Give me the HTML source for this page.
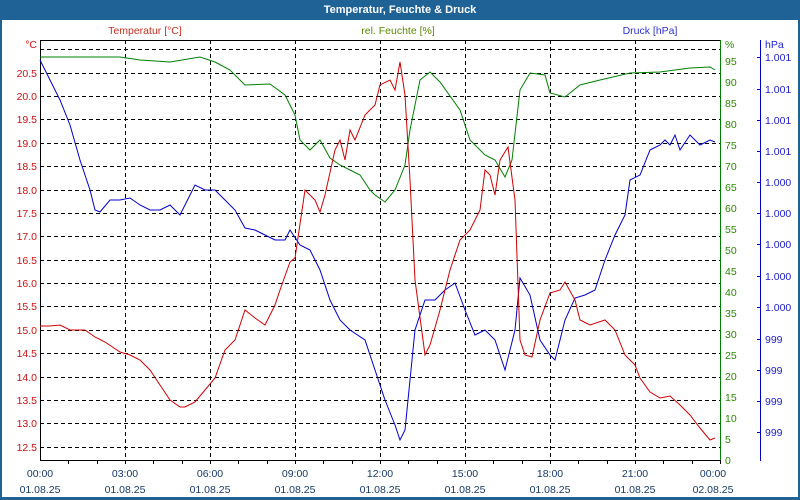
<!DOCTYPE html>
<html><head><meta charset="utf-8"><style>
html,body{margin:0;padding:0;width:800px;height:500px;overflow:hidden;background:#1e6296;}
svg{display:block;font-family:"Liberation Sans",sans-serif;}
</style></head><body>
<svg width="800" height="500" viewBox="0 0 800 500" xmlns="http://www.w3.org/2000/svg">
<rect x="0" y="0" width="800" height="500" fill="#1e6296"/>
<text x="400" y="13" fill="#fff" font-size="11" font-weight="bold" text-anchor="middle">Temperatur, Feuchte &amp; Druck</text>
<rect x="2" y="20" width="796" height="477" fill="#fff"/>
<g font-size="10.5">
<text x="145" y="34" fill="#c83020" text-anchor="middle">Temperatur [°C]</text>
<text x="398" y="34" fill="#5a8a00" text-anchor="middle">rel. Feuchte [%]</text>
<text x="650" y="34" fill="#3030d0" text-anchor="middle">Druck [hPa]</text>
</g>
<!-- grid -->
<g stroke="#000" stroke-width="1" stroke-dasharray="4,3" shape-rendering="crispEdges">
<line x1="40" y1="49.5" x2="720" y2="49.5"/>
<line x1="40" y1="73.5" x2="720" y2="73.5"/>
<line x1="40" y1="96.5" x2="720" y2="96.5"/>
<line x1="40" y1="119.5" x2="720" y2="119.5"/>
<line x1="40" y1="143.5" x2="720" y2="143.5"/>
<line x1="40" y1="166.5" x2="720" y2="166.5"/>
<line x1="40" y1="190.5" x2="720" y2="190.5"/>
<line x1="40" y1="213.5" x2="720" y2="213.5"/>
<line x1="40" y1="236.5" x2="720" y2="236.5"/>
<line x1="40" y1="260.5" x2="720" y2="260.5"/>
<line x1="40" y1="283.5" x2="720" y2="283.5"/>
<line x1="40" y1="306.5" x2="720" y2="306.5"/>
<line x1="40" y1="330.5" x2="720" y2="330.5"/>
<line x1="40" y1="353.5" x2="720" y2="353.5"/>
<line x1="40" y1="377.5" x2="720" y2="377.5"/>
<line x1="40" y1="400.5" x2="720" y2="400.5"/>
<line x1="40" y1="423.5" x2="720" y2="423.5"/>
<line x1="40" y1="447.5" x2="720" y2="447.5"/>
<line x1="125.5" y1="40" x2="125.5" y2="460"/>
<line x1="210.5" y1="40" x2="210.5" y2="460"/>
<line x1="295.5" y1="40" x2="295.5" y2="460"/>
<line x1="380.5" y1="40" x2="380.5" y2="460"/>
<line x1="465.5" y1="40" x2="465.5" y2="460"/>
<line x1="550.5" y1="40" x2="550.5" y2="460"/>
<line x1="635.5" y1="40" x2="635.5" y2="460"/>
</g>
<g shape-rendering="crispEdges">
<line x1="40" y1="40.5" x2="720" y2="40.5" stroke="#000"/>
<line x1="40.5" y1="40" x2="40.5" y2="461" stroke="#000"/>
<line x1="40" y1="460.5" x2="720" y2="460.5" stroke="#000"/>
<line x1="720.5" y1="40" x2="720.5" y2="461" stroke="#008000"/>
<line x1="760.5" y1="40" x2="760.5" y2="461" stroke="#0000cc"/>
</g>
<!-- x ticks -->
<g stroke="#000" shape-rendering="crispEdges">
<path d="M68.5 460v4M97.5 460v4M125.5 460v4M153.5 460v4M182.5 460v4M210.5 460v4M238.5 460v4M267.5 460v4M295.5 460v4M323.5 460v4M352.5 460v4M380.5 460v4M408.5 460v4M437.5 460v4M465.5 460v4M493.5 460v4M522.5 460v4M550.5 460v4M578.5 460v4M607.5 460v4M635.5 460v4M663.5 460v4M692.5 460v4M720.5 460v4"/>
</g>
<g stroke="#0000cc" shape-rendering="crispEdges">
<path d="M757 57.5h3M757 89.5h3M757 120.5h3M757 151.5h3M757 182.5h3M757 213.5h3M757 244.5h3M757 276.5h3M757 307.5h3M757 339.5h3M757 370.5h3M757 401.5h3M757 432.5h3"/>
</g>
<g font-size="10.5" fill="#d01010" text-anchor="end">
<text x="37" y="48">°C</text>
<text x="37" y="77">20.5</text><text x="37" y="100">20.0</text><text x="37" y="123">19.5</text>
<text x="37" y="147">19.0</text><text x="37" y="170">18.5</text><text x="37" y="194">18.0</text>
<text x="37" y="217">17.5</text><text x="37" y="240">17.0</text><text x="37" y="264">16.5</text>
<text x="37" y="287">16.0</text><text x="37" y="310">15.5</text><text x="37" y="334">15.0</text>
<text x="37" y="357">14.5</text><text x="37" y="381">14.0</text><text x="37" y="404">13.5</text>
<text x="37" y="427">13.0</text><text x="37" y="451">12.5</text>
</g>
<g font-size="10.5" fill="#2a8a00">
<text x="725" y="48">%</text>
<text x="725" y="65">95</text><text x="725" y="86">90</text><text x="725" y="107">85</text>
<text x="725" y="128">80</text><text x="725" y="149">75</text><text x="725" y="170">70</text>
<text x="725" y="191">65</text><text x="725" y="212">60</text><text x="725" y="233">55</text>
<text x="725" y="254">50</text><text x="725" y="275">45</text><text x="725" y="296">40</text>
<text x="725" y="317">35</text><text x="725" y="338">30</text><text x="725" y="359">25</text>
<text x="725" y="380">20</text><text x="725" y="401">15</text><text x="725" y="422">10</text>
<text x="725" y="443">5</text><text x="725" y="464">0</text>
</g>
<g font-size="10.5" fill="#2020d0">
<text x="765" y="48">hPa</text>
<text x="765" y="61">1.001</text><text x="765" y="93">1.001</text><text x="765" y="124">1.001</text>
<text x="765" y="155">1.001</text><text x="765" y="186">1.000</text><text x="765" y="217">1.000</text>
<text x="765" y="248">1.000</text><text x="765" y="280">1.000</text><text x="765" y="311">1.000</text>
<text x="765" y="343">999</text><text x="765" y="374">999</text><text x="765" y="405">999</text>
<text x="765" y="436">999</text>
</g>
<g font-size="10.5" fill="#1a3a6a" text-anchor="middle">
<text x="40" y="477">00:00</text><text x="125" y="477">03:00</text><text x="210" y="477">06:00</text>
<text x="295" y="477">09:00</text><text x="380" y="477">12:00</text><text x="465" y="477">15:00</text>
<text x="550" y="477">18:00</text><text x="635" y="477">21:00</text><text x="713" y="477">00:00</text>
<text x="40" y="493">01.08.25</text><text x="125" y="493">01.08.25</text><text x="210" y="493">01.08.25</text>
<text x="295" y="493">01.08.25</text><text x="380" y="493">01.08.25</text><text x="465" y="493">01.08.25</text>
<text x="550" y="493">01.08.25</text><text x="635" y="493">01.08.25</text><text x="713" y="493">02.08.25</text>
</g>
<g fill="none" stroke-width="1">
<polyline stroke="#008000" points="40,57 80,57 120,57 140,60 170,62 200,57 215,62 230,70 245,85 270,84 285,95 295,115 300,140 310,150 320,140 330,158 340,165 350,170 360,175 370,190 375,195 385,202 395,190 405,165 410,130 420,80 430,72 440,82 460,110 470,140 485,155 495,160 505,177 512,160 520,90 530,73 545,75 550,93 565,97 580,85 600,80 630,73 660,72 690,68 710,67 715,70"/>
<polyline stroke="#0000cc" points="40,60 50,80 60,100 70,125 80,160 90,190 95,210 100,212 110,200 120,200 130,198 140,205 150,210 160,210 170,205 180,215 185,205 195,185 205,190 215,190 225,200 235,210 245,228 255,230 265,235 275,240 285,240 290,230 300,245 310,250 320,270 330,300 340,320 350,330 365,340 375,370 385,400 395,425 400,440 405,430 410,380 415,330 425,300 435,300 445,290 455,283 465,310 475,335 485,330 495,340 505,370 515,330 520,278 530,295 540,340 550,355 555,360 565,320 575,298 585,295 595,290 605,260 615,235 625,215 630,180 640,175 650,150 660,145 665,140 670,145 675,135 680,150 690,135 700,145 710,140 715,142"/>
<polyline stroke="#d00000" points="40,326 50,326 60,325 70,330 85,330 95,337 105,342 120,352 130,355 140,360 150,370 160,385 170,400 180,407 185,407 195,402 205,390 215,378 225,350 235,340 245,310 255,318 265,325 275,305 280,290 290,262 295,258 305,190 315,200 320,212 325,195 335,150 340,140 345,160 350,130 355,140 365,115 375,105 380,85 390,80 395,90 400,62 405,95 410,180 415,280 425,355 430,345 440,310 450,270 460,240 470,230 480,210 485,170 490,175 495,195 500,160 508,147 515,200 520,340 525,355 532,357 540,320 550,293 560,290 565,282 575,300 580,320 590,325 605,320 615,330 625,355 635,365 640,378 650,392 660,398 670,396 680,405 690,415 700,428 710,440 715,438"/>
</g>
</svg>
</body></html>
